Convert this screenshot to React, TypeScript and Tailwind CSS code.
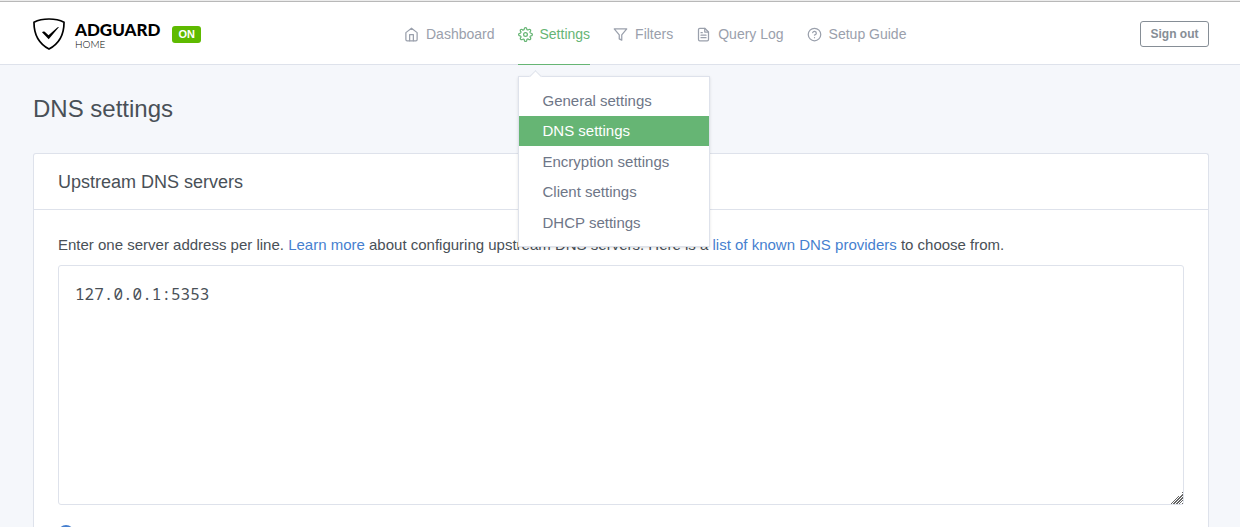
import { FiFileText, FiFilter, FiHelpCircle, FiHome, FiSettings } from "react-icons/fi";

const NAV = [
  { label: "Dashboard", Icon: FiHome },
  { label: "Settings", Icon: FiSettings },
  { label: "Filters", Icon: FiFilter },
  { label: "Query Log", Icon: FiFileText },
  { label: "Setup Guide", Icon: FiHelpCircle },
];

const MENU = ["General settings", "DNS settings", "Encryption settings", "Client settings", "DHCP settings"];

function Logo() {
  return (
    <a href="#home" className="flex items-center gap-[10px] text-black">
      <svg viewBox="0 0 32 32" className="h-8 w-8" fill="none" aria-hidden="true">
        <path
          d="M16 1C11 1 5.300 2 1 4.200C1 9 .5 22.500 16 31C31.500 22.500 31 9 31 4.200C26.700 2 21 1 16 1Z"
          stroke="currentColor"
          strokeWidth="1.700"
        />
        <path
          d="M15.700 21.300L9 14.200C9.800 13.500 11 13.400 12 14.100L15.500 17.200L24.300 9.400C24.900 9 25.500 8.800 26 9Z"
          fill="currentColor"
        />
      </svg>
      <span className="flex flex-col pt-1 font-[Lato,sans-serif]">
        <span className="text-[17px] leading-4 font-black">ADGUARD</span>
        <span className="text-[10px] leading-3 font-light">HOME</span>
      </span>
    </a>
  );
}

function SettingsMenu() {
  return (
    <div className="absolute top-[72px] left-0 z-10 grid h-[171px] w-48 grid-rows-5 border border-[#dee2eb] bg-white py-2 text-[15px] shadow-sm">
      <span className="absolute -top-[5px] left-3 h-[9px] w-[9px] rotate-45 border-t border-l border-[#dee2eb] bg-white" />
      {MENU.map((item) => (
        <a
          key={item}
          href="#settings"
          className={
            item === "DNS settings"
              ? "flex items-center bg-[#66b574] px-6 text-white"
              : "flex items-center px-6 text-[#6e7687]"
          }
        >
          {item}
        </a>
      ))}
    </div>
  );
}

export default function App() {
  return (
    <div className="flex h-screen flex-col overflow-hidden border-t border-[#ececec] bg-[#f5f7fb] font-['Liberation_Sans',Arial,sans-serif] text-[15px] text-[#495057]">
      <header className="flex h-16 shrink-0 items-stretch border-t border-b border-t-[#b8b8b8] border-b-[#dee2eb] bg-white pt-[2px] pr-[31px] pl-[33px]">
        <div className="flex w-[371px] items-center gap-3">
          <Logo />
          <span className="rounded-[3px] bg-[#5eba00] px-[6px] text-[11px] leading-[17px] font-bold text-white">ON</span>
        </div>
        <nav className="flex gap-[23px] text-sm">
          {NAV.map(({ label, Icon }) => {
            const active = label === "Settings";
            return (
              <div key={label} className="relative flex">
                <a
                  href="#nav"
                  className={
                    active
                      ? "-mb-px flex items-center gap-[7px] border-b border-[#66b574] text-[#66b574]"
                      : "flex items-center gap-[7px] text-[#9aa0ac]"
                  }
                >
                  <Icon className="h-[15px] w-[15px]" aria-hidden="true" />
                  {label}
                </a>
                {active && <SettingsMenu />}
              </div>
            );
          })}
        </nav>
        <button
          type="button"
          className="my-auto ml-auto h-[26px] w-[69px] rounded-[3px] border border-[#868e96] text-xs font-bold text-[#868e96]"
        >
          Sign out
        </button>
      </header>

      <main className="flex flex-1 flex-col pr-[31px] pl-[33px]">
        <h1 className="mt-7 mb-7 text-2xl leading-8">DNS settings</h1>
        <section className="flex-1 rounded-t-[3px] border border-b-0 border-[#dee2eb] bg-white">
          <h2 className="border-b border-[#dee2eb] px-6 pt-[15px] pb-[13px] text-lg leading-[27px]">
            Upstream DNS servers
          </h2>
          <form className="px-6 pt-[23px]">
            <label htmlFor="upstreams" className="block leading-6">
              Enter one server address per line.{" "}
              <a href="#learn" className="text-[#467fcf]">Learn more</a> about configuring upstream DNS servers. Here
              is a <a href="#providers" className="text-[#467fcf]">list of known DNS providers</a> to choose from.
            </label>
            <textarea
              id="upstreams"
              defaultValue="127.0.0.1:5353"
              spellCheck={false}
              className="mt-2 block h-60 w-full resize rounded-[3px] border border-[#dee2eb] bg-white px-4 py-4 font-['Noto_Sans_Mono','DejaVu_Sans_Mono',monospace] text-base leading-6 outline-none [&::-webkit-resizer]:bg-[linear-gradient(135deg,#fff_60%,transparent_60%),repeating-linear-gradient(135deg,#666_0px,#666_1px,#fff_1px,#fff_2px)]"
            />
            <input
              type="radio"
              name="mode"
              aria-label="Load-balancing"
              className="mt-5 block h-4 w-4 appearance-none rounded-full bg-[#467fcf]"
            />
          </form>
        </section>
      </main>
    </div>
  );
}
